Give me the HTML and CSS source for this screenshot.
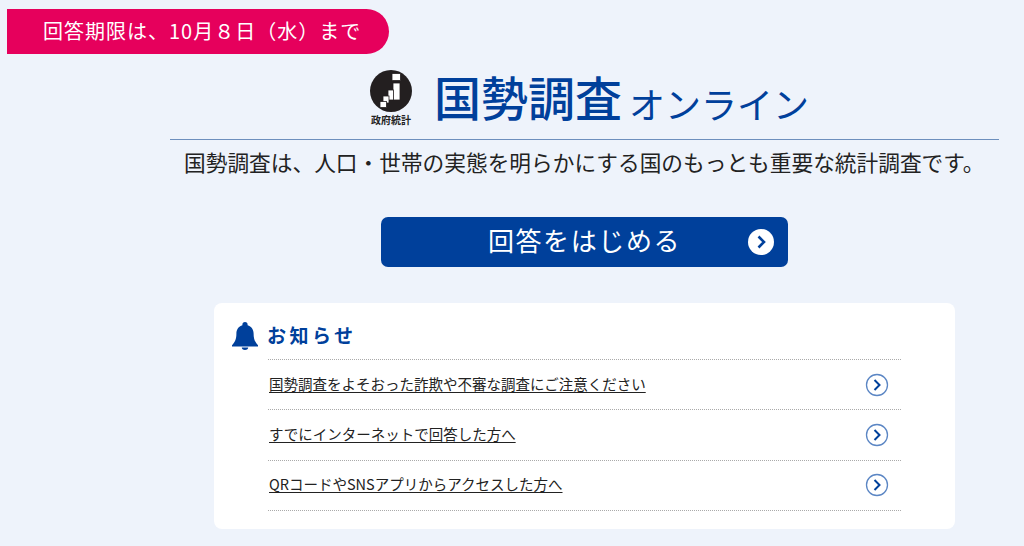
FILE: index.html
```html
<!DOCTYPE html>
<html lang="ja">
  <head>
    <meta charset="UTF-8" />
    <title>国勢調査オンライン</title>
    <link rel="stylesheet" href="styles.css">
  </head>
  <body>
    <div class="deadline">回答期限は、10月８日（水）まで</div>
    <div class="main">
      <div class="header">
        <div class="seal">
          <svg width="42" height="42" viewBox="0 0 42 42">
            <circle cx="21" cy="21" r="21" fill="#231f20" />
            <g fill="#fff" stroke="#231f20" stroke-width="0.800">
              <rect x="22" y="3.500" width="8.500" height="7" />
              <rect x="23" y="13" width="7" height="17" />
              <rect x="18" y="20" width="5.500" height="10" />
              <rect x="13" y="26" width="6" height="7" />
              <rect x="10" y="31.500" width="6.500" height="6" />
            </g>
          </svg>
          <span class="seal-text">政府統計</span>
        </div>
        <div class="title">国勢調査<span class="title-sub">オンライン</span></div>
      </div>
      <div class="lead">国勢調査は、人口・世帯の実態を明らかにする国のもっとも重要な統計調査です。</div>
      <a class="start">
        <span>回答をはじめる</span>
        <svg class="start-icon" width="26" height="26" viewBox="0 0 26 26">
          <circle cx="13" cy="13" r="13" fill="#fff" />
          <path d="M10.500 7.500 L16 13 L10.500 18.500" fill="none" stroke="#00409b" stroke-width="2.600" />
        </svg>
      </a>
      <div class="card">
        <div class="news-head">
          <svg class="bell" width="26" height="28" viewBox="0 0 26 28">
            <path fill="#00409b" d="M13 0a2.600 2.600 0 0 1 2.600 2.600v.6c3.800 1 6 4.200 6 8.300 0 5.500 1.300 8.500 4.400 11.700v1.300H0v-1.300c3.100-3.200 4.400-6.200 4.400-11.700 0-4.100 2.200-7.300 6-8.300v-.6A2.600 2.600 0 0 1 13 0zM9.800 25.500h6.400a3.200 2.500 0 0 1-6.400 0z" />
          </svg>
          <h2 class="news-title">お知らせ</h2>
        </div>
        <ul class="news">
          <li class="news-row">
            <a class="news-link">国勢調査をよそおった詐欺や不審な調査にご注意ください</a>
            <svg width="24" height="24" viewBox="0 0 24 24"><use href="#chev" /></svg>
          </li>
          <li class="news-row">
            <a class="news-link">すでにインターネットで回答した方へ</a>
            <svg width="24" height="24" viewBox="0 0 24 24"><use href="#chev" /></svg>
          </li>
          <li class="news-row">
            <a class="news-link">QRコードやSNSアプリからアクセスした方へ</a>
            <svg width="24" height="24" viewBox="0 0 24 24"><use href="#chev" /></svg>
          </li>
        </ul>
      </div>
    </div>
    <svg width="0" height="0" class="defs">
      <g id="chev">
        <circle cx="12" cy="12" r="10.500" fill="#fff" stroke="#5b86c4" stroke-width="1.300" />
        <path d="M9.500 7 L14.500 12 L9.500 17" fill="none" stroke="#00409b" stroke-width="2" />
      </g>
    </svg>
  </body>
</html>
```
FILE: styles.css
```css
* {
  box-sizing: border-box;
}
html, body {
  height: 546px;
  overflow: hidden;
}
body {
  margin: 0;
  padding-top: 9px;
  background-color: #eef3fb;
  color: #222;
  font-family: "Noto Sans CJK JP", "Noto Sans", sans-serif;
}
.deadline {
  width: 382px;
  height: 45px;
  margin-left: 7px;
  padding-left: 36px;
  border-radius: 0 23px 23px 0;
  background-color: #e6005c;
  color: #fff;
  font-size: 20px;
  line-height: 44px;
  letter-spacing: 1px;
  white-space: nowrap;
}
.main {
  width: 829px;
  margin-left: 170px;
}
.header {
  display: flex;
  align-items: flex-start;
  height: 70px;
  margin-top: 16px;
  padding-left: 200px;
  border-bottom: 1px solid #6d8fbd;
}
.seal {
  display: flex;
  flex-direction: column;
  align-items: center;
  width: 42px;
}
.defs {
  position: absolute;
}
.seal-text {
  margin-top: 1px;
  font-size: 10px;
  font-weight: 700;
  line-height: 13px;
  white-space: nowrap;
}
.title {
  margin-left: 22px;
  color: #00409b;
  font-size: 47px;
  font-weight: 500;
  line-height: 52px;
  white-space: nowrap;
}
.title-sub {
  margin-left: 7px;
  font-size: 36px;
  font-weight: 400;
  vertical-align: -3px;
}
.lead {
  padding-left: 14px;
  font-size: 21.700px;
  line-height: 44px;
  white-space: nowrap;
}
.start {
  position: relative;
  display: block;
  width: 407px;
  height: 50px;
  margin: 33px auto 0;
  border-radius: 7px;
  background-color: #00409b;
  color: #fff;
  font-size: 26px;
  line-height: 45px;
  letter-spacing: 1.600px;
  text-align: center;
}
.start-icon {
  position: absolute;
  top: 12px;
  right: 14px;
}
.card {
  width: 741px;
  height: 226px;
  margin: 36px auto 0;
  padding: 16px 54px 0 18px;
  border-radius: 8px;
  background-color: #fff;
}
.news-head {
  display: flex;
  align-items: center;
  height: 30px;
}
.bell {
  margin-top: 4px;
}
.news-title {
  margin: 0 0 0 9px;
  color: #00409b;
  font-size: 19px;
  font-weight: 700;
  letter-spacing: 3.500px;
}
.news {
  margin: 10px 0 0 36px;
  padding: 0;
  list-style: none;
  border-top: 1px dotted #aaa;
}
.news-row {
  display: flex;
  align-items: center;
  justify-content: space-between;
  height: 50.400px;
  padding: 0 12px 0 1px;
  border-bottom: 1px dotted #aaa;
}
.news-link {
  margin-bottom: 3px;
  color: #222;
  font-size: 14.500px;
  text-decoration: underline;
  text-underline-offset: 2px;
}
```
